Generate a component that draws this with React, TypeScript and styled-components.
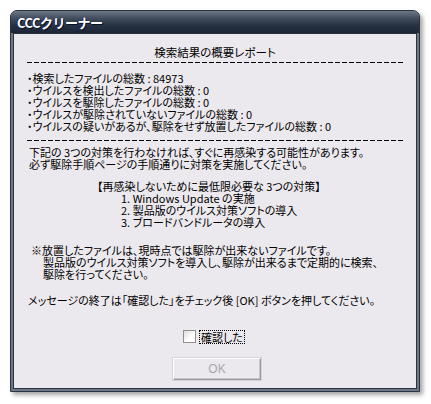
import styled, { createGlobalStyle } from "styled-components";

const GlobalStyle = createGlobalStyle`
  html, body {
    margin: 0;
    background: #ffffff;
  }
  body {
    font-family: "Noto Sans CJK JP", "Liberation Sans", sans-serif;
  }
`;

const Page = styled.div`
  width: 431px;
  height: 404px;
  padding: 10px 0 0 10px;
  box-sizing: border-box;
`;

const Window = styled.div`
  width: 410px;
  height: 382px;
  display: flex;
  flex-direction: column;
  box-sizing: border-box;
  background: #6e7785;
  border: 1px solid #2a3340;
  border-radius: 7px 7px 0 0;
  box-shadow: 3px 3px 4px rgba(0, 0, 0, 0.35);
  padding: 0 2px 2px 2px;
`;

const TitleBar = styled.div`
  height: 22px;
  margin: 0 -2px;
  display: flex;
  align-items: center;
  padding-left: 6px;
  border-radius: 6px 6px 0 0;
  background: linear-gradient(#6b7786 0%, #3f4a5a 35%, #243042 70%, #1b2535 100%);
  color: #ffffff;
  font-family: "Noto Sans CJK JP", "Liberation Sans", sans-serif;
  font-weight: bold;
  font-size: 13px;
  letter-spacing: -0.5px;
  text-shadow: 1px 1px 0 #0a1020, -1px 0 0 #1c2a66;
`;

const Client = styled.div`
  flex: 1;
  background: #ece9ee;
  border: 1px solid #2a3340;
  padding: 12px 12px 0 13px;
  font-size: 11px;
  line-height: 12px;
  color: #000;
  font-feature-settings: "palt";
  display: flex;
  flex-direction: column;
`;

const Heading = styled.div`
  text-align: center;
  font-size: 11.5px;
  margin-left: -1px;
`;

const Dashes = styled.div<{ $top: number; $gap: number }>`
  height: 1px;
  margin: ${(p) => p.$top}px 0 ${(p) => p.$gap}px 0;
  background: repeating-linear-gradient(to right, #000 0 5px, transparent 5px 7px);
`;

const Block = styled.div<{ $indent?: number; $top?: number }>`
  padding-left: ${(p) => p.$indent ?? 0}px;
  margin-top: ${(p) => p.$top ?? 0}px;
  white-space: nowrap;
`;

const Line = styled.div<{ $indent?: number }>`
  padding-left: ${(p) => p.$indent ?? 0}px;
`;

const CheckRow = styled.label`
  margin-top: 24px;
  display: flex;
  align-items: center;
  justify-content: center;
  gap: 4px;
  margin-left: -4px;
`;

const Box = styled.span`
  width: 11px;
  height: 11px;
  background: linear-gradient(135deg, #dcdcdc, #ffffff 60%);
  border: 1px solid #8f8f8f;
  display: inline-block;
`;

const Focus = styled.span`
  outline: 1px dotted #000;
  outline-offset: 0;
  padding: 0 1px;
`;

const ButtonRow = styled.div`
  display: flex;
  justify-content: center;
  margin-top: 15px;
  margin-left: 3px;
`;

const OkButton = styled.button`
  width: 88px;
  height: 22px;
  box-sizing: border-box;
  background: #ece9ee;
  border: 1px solid;
  border-color: #ffffff #9a9a9a #9a9a9a #ffffff;
  box-shadow: inset -1px -1px 0 #c8c6cc, 0 0 0 1px #d6d4da;
  color: #a8a7ad;
  font-family: "Liberation Sans", sans-serif;
  font-size: 12px;
  padding: 0;
`;

const items = [
  "・検索したファイルの総数 : 84973",
  "・ウイルスを検出したファイルの総数 : 0",
  "・ウイルスを駆除したファイルの総数 : 0",
  "・ウイルスが駆除されていないファイルの総数 : 0",
  "・ウイルスの疑いがあるが、駆除をせず放置したファイルの総数 : 0",
];

export default function App() {
  return (
    <Page>
      <GlobalStyle />
      <Window>
        <TitleBar>CCCクリーナー</TitleBar>
        <Client>
          <Heading>検索結果の概要レポート</Heading>
          <Dashes $top={4} $gap={9} />
          <Block>
            {items.map((t) => (
              <Line key={t}>{t}</Line>
            ))}
          </Block>
          <Dashes $top={8} $gap={5} />
          <Block $indent={2}>
            <Line>下記の 3つの対策を行わなければ、すぐに再感染する可能性があります。</Line>
            <Line>必ず駆除手順ページの手順通りに対策を実施してください。</Line>
          </Block>
          <Block $indent={70} $top={10}>
            <Line>【再感染しないために最低限必要な 3つの対策】</Line>
            <Line $indent={24}>1. Windows Update の実施</Line>
            <Line $indent={24}>2. 製品版のウイルス対策ソフトの導入</Line>
            <Line $indent={24}>3. ブロードバンドルータの導入</Line>
          </Block>
          <Block $indent={4} $top={16}>
            <Line>※放置したファイルは、現時点では駆除が出来ないファイルです。</Line>
            <Line $indent={12}>製品版のウイルス対策ソフトを導入し、駆除が出来るまで定期的に検索、</Line>
            <Line $indent={12}>駆除を行ってください。</Line>
          </Block>
          <Block $indent={1} $top={14}>
            <Line>メッセージの終了は「確認した」をチェック後 [OK] ボタンを押してください。</Line>
          </Block>
          <CheckRow>
            <Box />
            <Focus>確認した</Focus>
          </CheckRow>
          <ButtonRow>
            <OkButton disabled>OK</OkButton>
          </ButtonRow>
        </Client>
      </Window>
    </Page>
  );
}
